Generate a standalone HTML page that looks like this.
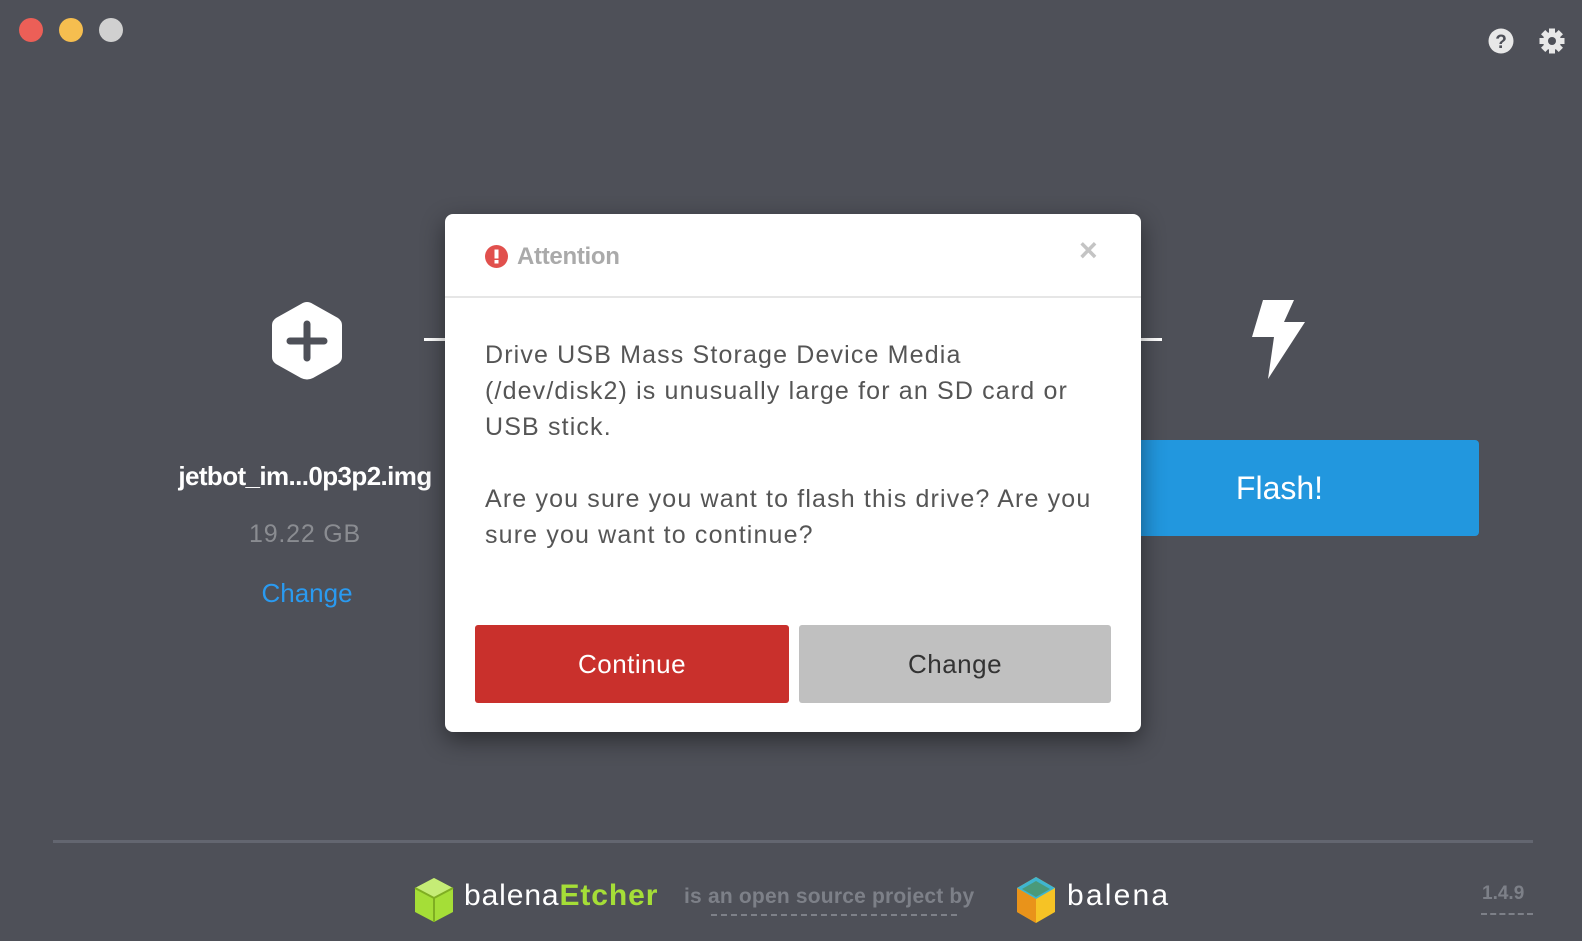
<!DOCTYPE html>
<html><head><meta charset="utf-8"><style>
*{margin:0;padding:0;box-sizing:border-box}
body{width:1582px;height:941px;background:#4e5058;font-family:"Liberation Sans",sans-serif;position:relative;overflow:hidden}
.abs{position:absolute}
.dot{position:absolute;top:18px;width:24px;height:24px;border-radius:50%}
.modal{position:absolute;left:445px;top:214px;width:696px;height:518px;background:#fff;border-radius:8px;box-shadow:0 8px 24px rgba(0,0,0,.45)}
.body{position:absolute;left:40px;top:123px;font-size:25px;line-height:36px;color:#555;letter-spacing:1.15px}
.btn{position:absolute;top:411px;height:78px;border-radius:3px;font-size:26px;text-align:center;line-height:78px;letter-spacing:.5px}
</style></head><body>
<div class="dot" style="left:19px;background:#ec5f57"></div>
<div class="dot" style="left:59px;background:#f6be4f"></div>
<div class="dot" style="left:99px;background:#d0d0d0"></div>

<svg class="abs" style="left:1488px;top:28px" width="26" height="26" viewBox="0 0 26 26"><circle cx="13" cy="13" r="12.5" fill="#e8e8e8"/><text x="13" y="20" font-size="19" font-weight="bold" text-anchor="middle" fill="#4e5058" font-family="Liberation Sans">?</text></svg>
<svg class="abs" style="left:1539px;top:28px" width="26" height="26" viewBox="0 0 26 26"><g fill="#e8e8e8" transform="translate(13 13)"><rect x="-3" y="-12.5" width="6" height="25"/><rect x="-3" y="-12.5" width="6" height="25" transform="rotate(45)"/><rect x="-3" y="-12.5" width="6" height="25" transform="rotate(90)"/><rect x="-3" y="-12.5" width="6" height="25" transform="rotate(135)"/><circle r="9"/></g><circle cx="13" cy="13" r="4" fill="#4e5058"/></svg>

<svg class="abs" style="left:270px;top:300px" width="74" height="82" viewBox="0 0 74 82"><path d="M37 2 Q40 2 43 4 L68 18 Q72 21 72 25 L72 57 Q72 61 68 64 L43 78 Q37 81 31 78 L6 64 Q2 61 2 57 L2 25 Q2 21 6 18 L31 4 Q34 2 37 2Z" fill="#fff"/><path d="M37 24 V58 M20 41 H54" stroke="#4e5058" stroke-width="7" stroke-linecap="round"/></svg>
<div class="abs" style="left:424px;top:338px;width:24px;height:3px;background:#fff"></div>
<div class="abs" style="left:1138px;top:338px;width:24px;height:3px;background:#fff"></div>
<svg class="abs" style="left:0;top:0" width="1582" height="941"><polygon points="1263,300 1294,300 1284,322 1305,322 1268,379 1274,337 1252,337" fill="#fff"/></svg>

<div class="abs" style="left:150px;top:461px;width:310px;text-align:center;color:#fff;font-size:26px;font-weight:bold;letter-spacing:-.6px">jetbot_im...0p3p2.img</div>
<div class="abs" style="left:160px;top:520px;width:290px;text-align:center;color:#8a8c91;font-size:25px;letter-spacing:.8px">19.22 GB</div>
<div class="abs" style="left:162px;top:578px;width:290px;text-align:center;color:#2a9af0;font-size:26px">Change</div>

<div class="abs" style="left:1120px;top:440px;width:359px;height:96px;background:#2297de;border-radius:4px;color:#fff;font-size:32px;line-height:96px;text-align:center;padding-right:40px">Flash!</div>

<div class="modal">
 <svg class="abs" style="left:40px;top:31px" width="23" height="23" viewBox="0 0 23 23"><circle cx="11.5" cy="11.5" r="11.5" fill="#e1504d"/><rect x="9.5" y="4.5" width="4" height="9" fill="#fff"/><rect x="9.5" y="15" width="4" height="3.5" fill="#fff"/></svg>
 <div class="abs" style="left:72px;top:29px;font-size:24px;font-weight:bold;color:#aaa;letter-spacing:-.3px">Attention</div>
 <div class="abs" style="left:634px;top:18px;font-size:32px;color:#c4c4c4;font-weight:bold">×</div>
 <div class="abs" style="left:0;top:82px;width:696px;height:2px;background:#e6e6e6"></div>
 <div class="body">Drive USB Mass Storage Device Media<br>(/dev/disk2) is unusually large for an SD card or<br>USB stick.<br><br>Are you sure you want to flash this drive? Are you<br>sure you want to continue?</div>
 <div class="btn" style="left:30px;width:314px;background:#c9302c;color:#fff">Continue</div>
 <div class="btn" style="left:354px;width:312px;background:#c0c0c0;color:#333">Change</div>
</div>

<div class="abs" style="left:53px;top:840px;width:1480px;height:3px;background:#636670"></div>

<svg class="abs" style="left:413px;top:877px" width="42" height="46" viewBox="0 0 42 46"><path d="M21 1 L40 11 V35 L21 45 L2 35 V11Z" fill="#a5de37"/><path d="M21 1 L40 11 L21 21 L2 11Z" fill="#c5ec76"/><path d="M21 21 V45" stroke="#7fae22" stroke-width="2"/><path d="M2 11 L21 21 L40 11" stroke="#7fae22" stroke-width="2" fill="none"/></svg>
<div class="abs" style="left:464px;top:879px;font-size:30px;color:#fff;letter-spacing:.9px">balena<span style="color:#a5de37;font-weight:bold">Etcher</span></div>
<div class="abs" style="left:684px;top:885px;font-size:21px;font-weight:bold;color:#7d8088;letter-spacing:.2px">is an open source project by</div>
<div class="abs" style="left:711px;top:914px;width:246px;border-top:2px dashed #7d8088"></div>
<svg class="abs" style="left:1015px;top:876px" width="42" height="48" viewBox="0 0 42 48"><path d="M21 1 L40 12 V36 L21 47 L2 36 V12Z" fill="#f6c325"/><path d="M21 1 L40 12 L21 23 L2 12Z" fill="#3fb5cf"/><path d="M21 5 L35 13 L21 21 L7 13Z" fill="#4a9a7a"/><path d="M2 12 L21 23 V47 L2 36Z" fill="#e9931a"/></svg>
<div class="abs" style="left:1067px;top:879px;font-size:30px;color:#fff;letter-spacing:2.2px">balena</div>
<div class="abs" style="left:1482px;top:883px;font-size:19px;font-weight:bold;color:#7d8088">1.4.9</div>
<div class="abs" style="left:1481px;top:913px;width:52px;border-top:2px dashed #7d8088"></div>
</body></html>
